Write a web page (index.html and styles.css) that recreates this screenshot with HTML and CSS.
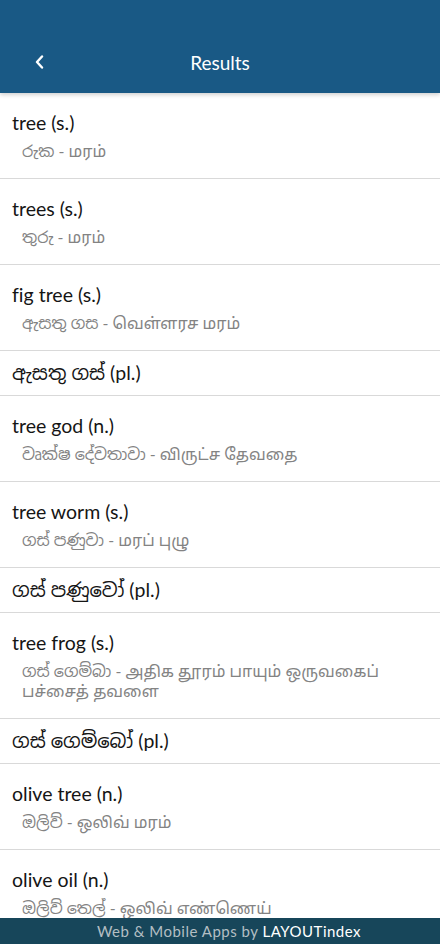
FILE: index.html
```html
<!DOCTYPE html>
<html lang="en">
<head>
  <meta charset="UTF-8" />
  <meta name="viewport" content="width=device-width, initial-scale=1.0" />
  <title>Results</title>
  <link rel="stylesheet" href="styles.css">
</head>
<body>
  <div class="page">
    <header class="topbar">
      <div class="bar">
        <button class="back" aria-label="Back">
          <svg width="10" height="14" viewBox="0 0 10 14"><path d="M7 1.5 L2 7 L7 12.5" fill="none" stroke="#fff" stroke-width="2.4" stroke-linecap="round" stroke-linejoin="round"/></svg>
        </button>
        <h1>Results</h1>
      </div>
    </header>

    <ul class="results">
      <li class="entry">
        <div class="word">tree (s.)</div>
        <div class="meaning">රුක - மரம்</div>
      </li>
      <li class="entry">
        <div class="word">trees (s.)</div>
        <div class="meaning">තුරු - மரம்</div>
      </li>
      <li class="entry">
        <div class="word">fig tree (s.)</div>
        <div class="meaning">ඇසතු ගස - வெள்ளரச மரம்</div>
      </li>
      <li class="entry plural">
        <div class="word">ඇසතු ගස් (pl.)</div>
      </li>
      <li class="entry">
        <div class="word">tree god (n.)</div>
        <div class="meaning">වෘක්ෂ දේවතාවා - விருட்ச தேவதை</div>
      </li>
      <li class="entry">
        <div class="word">tree worm (s.)</div>
        <div class="meaning">ගස් පණුවා - மரப் புழு</div>
      </li>
      <li class="entry plural">
        <div class="word">ගස් පණුවෝ (pl.)</div>
      </li>
      <li class="entry">
        <div class="word">tree frog (s.)</div>
        <div class="meaning">ගස් ගෙම්බා - அதிக தூரம் பாயும் ஒருவகைப் பச்சைத் தவளை</div>
      </li>
      <li class="entry plural">
        <div class="word">ගස් ගෙම්බෝ (pl.)</div>
      </li>
      <li class="entry">
        <div class="word">olive tree (n.)</div>
        <div class="meaning">ඔලිව් - ஒலிவ் மரம்</div>
      </li>
      <li class="entry">
        <div class="word">olive oil (n.)</div>
        <div class="meaning">ඔලිව් තෙල් - ஒலிவ் எண்ணெய்</div>
      </li>
    </ul>

    <footer class="credit">Web &amp; Mobile Apps by <span class="brand">LAYOUTindex</span></footer>
  </div>
</body>
</html>
```

FILE: styles.css
```css
* {
  box-sizing: border-box;
}

body {
  margin: 0;
  font-family: Lato, "Noto Sans", "Noto Sans Sinhala", "Noto Sans Tamil", sans-serif;
  font-variant-ligatures: none;
  background: #ffffff;
}

.page {
  display: flex;
  flex-direction: column;
  height: 100vh;
  overflow: hidden;
}

.topbar {
  background-color: #195985;
  padding: 38px 0 7px;
  box-shadow: 0 2px 4px rgba(0, 0, 0, 0.18);
  position: relative;
  z-index: 1;
  flex: none;
}

.bar {
  height: 48px;
  display: flex;
  align-items: center;
  justify-content: center;
  position: relative;
}

.back {
  position: absolute;
  left: 28px;
  top: 0;
  height: 48px;
  width: 24px;
  display: flex;
  align-items: center;
  justify-content: center;
  background: none;
  border: none;
  padding: 0;
  cursor: pointer;
}

.bar h1 {
  margin: 0;
  color: #ffffff;
  font-size: 19px;
  font-weight: 400;
}

.results {
  list-style: none;
  margin: 0;
  padding: 0;
  flex: 1;
  overflow: hidden;
}

.entry {
  padding: 18px 12px 17px;
  border-bottom: 1px solid #d9d9d9;
}

.entry.plural {
  padding: 10px 12px;
}

.word {
  font-size: 19.5px;
  line-height: 24px;
  color: #151515;
}

.meaning {
  margin-top: 6px;
  padding-left: 10px;
  font-size: 16px;
  line-height: 20px;
  color: #838383;
}

.credit {
  flex: none;
  height: 26px;
  padding-left: 18px;
  background-color: #17465a;
  color: #b3bec3;
  font-size: 15px;
  letter-spacing: 0.5px;
  line-height: 26px;
  text-align: center;
}

.brand {
  color: #ffffff;
}
```
